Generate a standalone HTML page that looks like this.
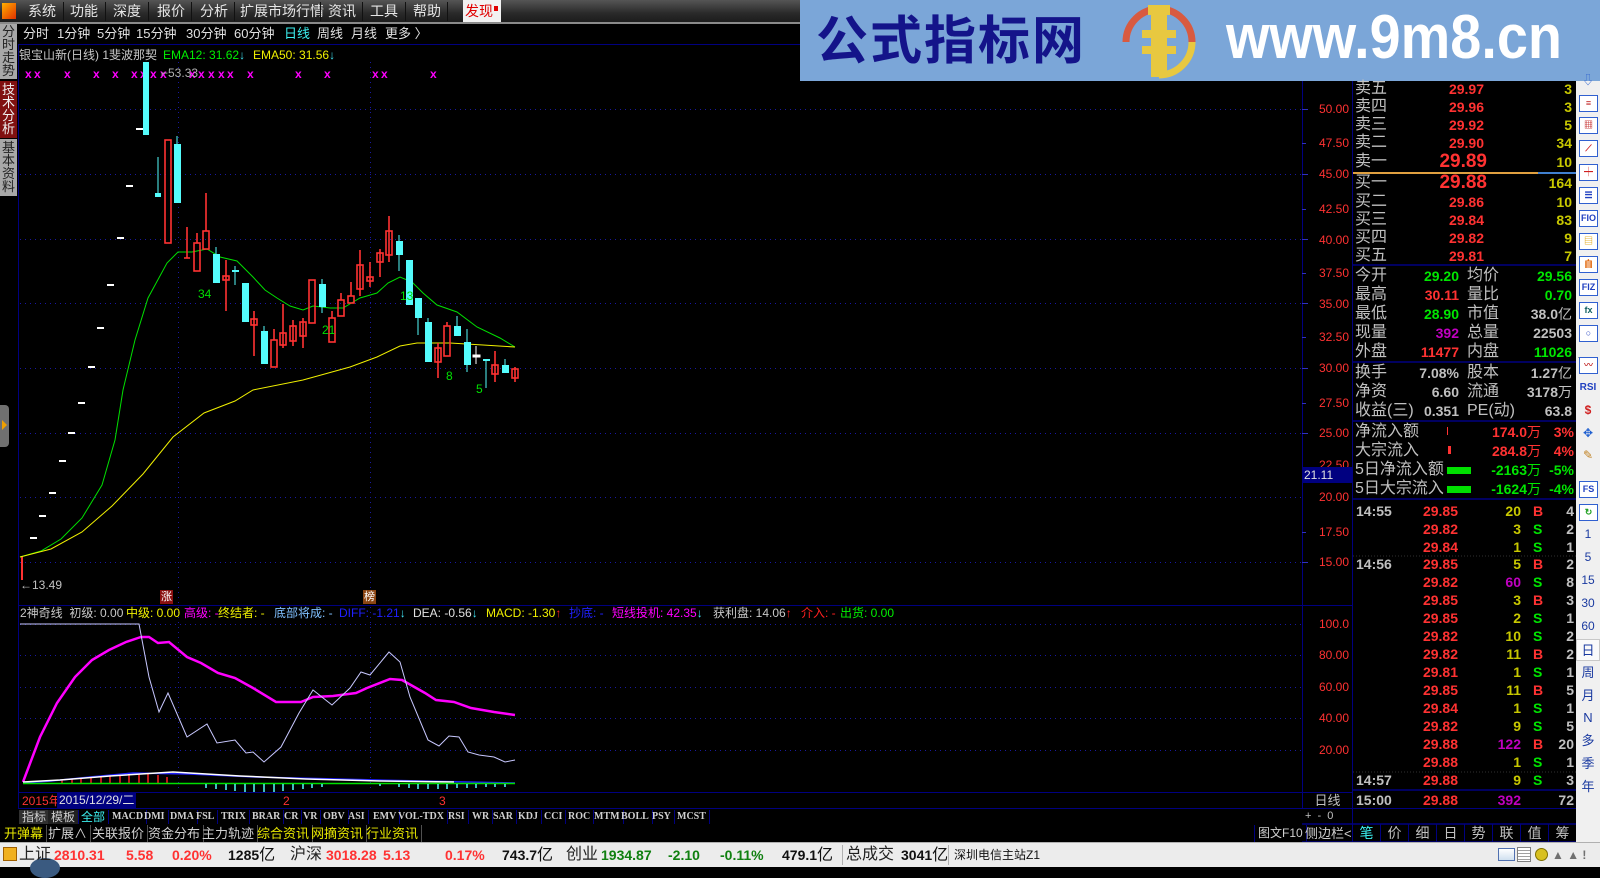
<!DOCTYPE html>
<html><head><meta charset="utf-8">
<style>
*{margin:0;padding:0;box-sizing:border-box}
body{width:1600px;height:867px;background:#000;overflow:hidden;position:relative;font-family:"Liberation Sans","Noto Sans CJK SC",sans-serif;}
.a{position:absolute;white-space:nowrap;line-height:18px;height:18px}
.b{font-weight:bold}
.lb{font-size:16px;color:#c0c0c0}
.pr{font-size:14px;font-weight:bold;color:#ff3232;text-align:right}
.vy{font-size:14px;font-weight:bold;color:#c8c800;text-align:right}
.g{color:#00e600}.r{color:#ff3232}.m{color:#c000c0}.w{color:#c0c0c0}.y{color:#c8c800}
.mi{position:absolute;top:0;height:22px;line-height:22px;font-size:14px;color:#e6e6e6}
.pb{position:absolute;top:25px;height:18px;line-height:18px;font-size:13px;color:#e0e0e0}
.it{position:absolute;top:810px;height:14px;line-height:14px;font-size:10px;color:#d0d0d0;font-family:"Liberation Serif",serif;font-weight:bold;border-right:1px solid #000080;padding:0 3px}
.fr{position:absolute;top:825px;height:17px;line-height:17px;font-size:13px;color:#d0d0d0;border-right:1px solid #505050;padding:0 3px}
.ax{position:absolute;font-size:12px;color:#ff3232;text-align:right;width:46px;left:1303px;height:14px;line-height:14px}
.st{position:absolute;top:844px;height:22px;line-height:22px;font-size:14px;font-weight:bold}
.tab{position:absolute;top:824px;height:18px;width:28px;line-height:18px;text-align:center;font-size:14px;color:#c0c0c0;border-right:1px solid #000080}
.ic{position:absolute;left:1579px;width:19px;height:17px;border:1px solid #3060d0;background:#fff;font-size:9px;color:#2040c0;text-align:center;line-height:15px;font-weight:bold}
.sn{position:absolute;left:1576px;width:24px;text-align:center;font-size:12px;color:#1a3aa0;height:16px;line-height:16px}
</style></head><body>

<div style="position:absolute;left:0;top:0;width:800px;height:22px;background:linear-gradient(#555,#2a2a2a 60%,#1c1c1c)"></div>
<div style="position:absolute;left:0;top:22px;width:800px;height:2px;background:#8a8a8a"></div>
<div style="position:absolute;left:2px;top:3px;width:14px;height:16px;background:linear-gradient(135deg,#ffb000,#e03000)"></div>
<div class="mi" style="left:28px">系统</div>
<div class="mi" style="left:70px">功能</div>
<div class="mi" style="left:113px">深度</div>
<div class="mi" style="left:157px">报价</div>
<div class="mi" style="left:200px">分析</div>
<div class="mi" style="left:240px">扩展市场行情</div>
<div class="mi" style="left:328px">资讯</div>
<div class="mi" style="left:370px">工具</div>
<div class="mi" style="left:413px">帮助</div>
<div style="position:absolute;left:63px;top:2px;width:1px;height:19px;background:#111"></div>
<div style="position:absolute;left:105px;top:2px;width:1px;height:19px;background:#111"></div>
<div style="position:absolute;left:148px;top:2px;width:1px;height:19px;background:#111"></div>
<div style="position:absolute;left:191px;top:2px;width:1px;height:19px;background:#111"></div>
<div style="position:absolute;left:234px;top:2px;width:1px;height:19px;background:#111"></div>
<div style="position:absolute;left:320px;top:2px;width:1px;height:19px;background:#111"></div>
<div style="position:absolute;left:362px;top:2px;width:1px;height:19px;background:#111"></div>
<div style="position:absolute;left:405px;top:2px;width:1px;height:19px;background:#111"></div>
<div style="position:absolute;left:447px;top:2px;width:1px;height:19px;background:#111"></div>
<div style="position:absolute;left:463px;top:0;width:38px;height:22px;background:#f2f2f2"></div>
<div class="mi" style="left:465px;color:#e00000">发现</div>
<div style="position:absolute;left:494px;top:6px;width:4px;height:5px;background:#e00000"></div>

<div style="position:absolute;left:800px;top:0;width:800px;height:81px;background:#7ba6d8"></div>
<div style="position:absolute;left:816px;top:6px;font-size:52px;line-height:62px;font-weight:bold;color:#14148a;font-family:'Noto Sans CJK SC',sans-serif;letter-spacing:2px">公式指标网</div>
<svg style="position:absolute;left:1118px;top:2px" width="82" height="80" viewBox="0 0 82 80">
<path d="M8 40 A33 33 0 0 1 74 40" fill="none" stroke="#d85a40" stroke-width="7"/>
<path d="M74 40 A33 33 0 0 1 41 73" fill="none" stroke="#e8c840" stroke-width="7"/>
<rect x="30" y="3" width="22" height="10" fill="#e8c840"/>
<rect x="33" y="13" width="16" height="62" fill="#e8c840"/>
<rect x="24" y="28" width="34" height="8" fill="#e8c840"/>
<rect x="24" y="44" width="34" height="8" fill="#e8c840"/>
</svg>
<div style="position:absolute;left:1226px;top:5px;font-size:62px;line-height:66px;font-weight:bold;color:#fff;font-family:'Liberation Sans',sans-serif;transform:scaleX(0.9);transform-origin:0 0">www.9m8.cn</div>

<div class="pb" style="left:23px">分时</div>
<div class="pb" style="left:57px">1分钟</div>
<div class="pb" style="left:97px">5分钟</div>
<div class="pb" style="left:136px">15分钟</div>
<div class="pb" style="left:186px">30分钟</div>
<div class="pb" style="left:234px">60分钟</div>
<div class="pb" style="left:284px;color:#3cf0f0">日线</div>
<div class="pb" style="left:317px">周线</div>
<div class="pb" style="left:351px">月线</div>
<div class="pb" style="left:385px">更多 〉</div>
<div style="position:absolute;left:18px;top:44px;width:782px;height:1px;background:#000080"></div>

<div style="position:absolute;left:0;top:24px;width:17px;height:55px;background:#a8a8a8;color:#222;font-size:13px;line-height:13px;text-align:center;padding-top:1px">分<br>时<br>走<br>势</div>
<div style="position:absolute;left:0;top:81px;width:17px;height:57px;background:#801010;color:#f0f0f0;font-size:13px;line-height:13px;text-align:center;padding-top:2px">技<br>术<br>分<br>析</div>
<div style="position:absolute;left:0;top:139px;width:17px;height:57px;background:#a8a8a8;color:#222;font-size:13px;line-height:13px;text-align:center;padding-top:2px">基<br>本<br>资<br>料</div>
<div style="position:absolute;left:0;top:405px;width:9px;height:42px;background:#707070;border-radius:0 4px 4px 0"></div>
<div style="position:absolute;left:2px;top:420px;width:0;height:0;border-left:5px solid #f0a000;border-top:5px solid transparent;border-bottom:5px solid transparent"></div>

<div class="a" style="left:19px;top:46px;font-size:12px;color:#c8c8c8">银宝山新(日线) 1斐波那契</div>
<div class="a" style="left:163px;top:46px;font-size:12px;color:#00f000">EMA12: 31.62<span style="color:#40e0f0">↓</span></div>
<div class="a" style="left:253px;top:46px;font-size:12px;color:#f0f000">EMA50: 31.56<span style="color:#40e0f0">↓</span></div>

<svg style="position:absolute;left:0;top:0" width="1600" height="867">
<g stroke="#000080" stroke-width="1">
<line x1="18.5" y1="45" x2="18.5" y2="808"/>
<line x1="1302.5" y1="81" x2="1302.5" y2="808"/>
<line x1="18" y1="605.5" x2="1352" y2="605.5"/>
<line x1="18" y1="792.5" x2="1352" y2="792.5"/>
<line x1="18" y1="808.5" x2="1576" y2="808.5"/>
<line x1="1352.5" y1="81" x2="1352.5" y2="842"/>
</g>
<g stroke="#1818a0" stroke-width="1" stroke-dasharray="1,4">
<line x1="20" y1="109.5" x2="1302" y2="109.5"/>
<line x1="20" y1="174.5" x2="1302" y2="174.5"/>
<line x1="20" y1="239.5" x2="1302" y2="239.5"/>
<line x1="20" y1="303.5" x2="1302" y2="303.5"/>
<line x1="20" y1="368.5" x2="1302" y2="368.5"/>
<line x1="20" y1="433.5" x2="1302" y2="433.5"/>
<line x1="20" y1="497.5" x2="1302" y2="497.5"/>
<line x1="20" y1="562.5" x2="1302" y2="562.5"/>
<line x1="20" y1="624.5" x2="1302" y2="624.5"/>
<line x1="20" y1="655.5" x2="1302" y2="655.5"/>
<line x1="20" y1="687.5" x2="1302" y2="687.5"/>
<line x1="20" y1="718.5" x2="1302" y2="718.5"/>
<line x1="20" y1="750.5" x2="1302" y2="750.5"/>
<line x1="178.5" y1="62" x2="178.5" y2="790"/>
<line x1="370.5" y1="62" x2="370.5" y2="790"/>
</g>
<g stroke="#3030c0" stroke-width="1">
<line x1="1302" y1="109.5" x2="1308" y2="109.5"/><line x1="1302" y1="143.5" x2="1306" y2="143.5"/>
<line x1="1302" y1="174.5" x2="1308" y2="174.5"/><line x1="1302" y1="209.5" x2="1306" y2="209.5"/>
<line x1="1302" y1="239.5" x2="1308" y2="239.5"/><line x1="1302" y1="273.5" x2="1306" y2="273.5"/>
<line x1="1302" y1="303.5" x2="1308" y2="303.5"/><line x1="1302" y1="337.5" x2="1306" y2="337.5"/>
<line x1="1302" y1="368.5" x2="1308" y2="368.5"/><line x1="1302" y1="403.5" x2="1306" y2="403.5"/>
<line x1="1302" y1="433.5" x2="1308" y2="433.5"/><line x1="1302" y1="532.5" x2="1306" y2="532.5"/>
<line x1="1302" y1="562.5" x2="1308" y2="562.5"/>
</g>
<g fill="#ff00ff" font-size="12" font-weight="bold" font-family="Liberation Sans">
<text x="25" y="78">x</text><text x="34" y="78">x</text><text x="64" y="78">x</text><text x="93" y="78">x</text><text x="112" y="78">x</text><text x="131" y="78">x</text><text x="140" y="78">x</text><text x="150" y="78">x</text><text x="160" y="78">x</text><text x="189" y="78">x</text><text x="198" y="78">x</text><text x="208" y="78">x</text><text x="218" y="78">x</text><text x="227" y="78">x</text><text x="247" y="78">x</text><text x="295" y="78">x</text><text x="324" y="78">x</text><text x="372" y="78">x</text><text x="381" y="78">x</text><text x="430" y="78">x</text>
</g>
<text x="161" y="77" fill="#b0b0b0" font-size="12" font-family="Liberation Sans">⌐53.33</text>
<g stroke="#ffffff" stroke-width="2">
<line x1="136" y1="129" x2="143" y2="129"/><line x1="126" y1="186" x2="133" y2="186"/>
<line x1="117" y1="238" x2="124" y2="238"/><line x1="107" y1="285" x2="114" y2="285"/>
<line x1="97" y1="328" x2="104" y2="328"/><line x1="88" y1="367" x2="95" y2="367"/>
<line x1="78" y1="403" x2="85" y2="403"/><line x1="68" y1="433" x2="75" y2="433"/>
<line x1="59" y1="461" x2="66" y2="461"/><line x1="49" y1="493" x2="56" y2="493"/>
<line x1="39" y1="516" x2="46" y2="516"/><line x1="30" y1="538" x2="37" y2="538"/>
</g>
<rect x="21" y="556" width="2" height="24" fill="#ff3232"/>
<polyline fill="none" stroke="#00e000" stroke-width="1" points="20,557 41,551 61,539 82,518 102,485 115,440 123,390 135,340 148,298 167,263 178,252 192,252 207,249 220,257 237,261 253,277 265,290 277,298 290,306 303,310 313,306 330,308 343,308 360,298 377,293 388,283 400,277 412,282 423,293 437,305 457,312 477,327 500,338 515,347"/>
<polyline fill="none" stroke="#f0f000" stroke-width="1" points="20,557 51,549 82,532 112,506 143,474 173,437 204,413 235,401 253,390 303,380 350,367 377,357 400,346 417,343 450,343 483,345 515,347"/>
<g fill="#54fcfc" stroke="#54fcfc">
<rect x="143" y="62" width="6" height="73" stroke="none"/>
<line x1="158" y1="157" x2="158" y2="197"/><rect x="155" y="193" width="6" height="4" stroke="none"/>
<line x1="177" y1="136" x2="177" y2="146"/><rect x="174" y="144" width="7" height="59" stroke="none"/>
<line x1="216" y1="247" x2="216" y2="255"/><rect x="213" y="254" width="7" height="29" stroke="none"/>
<line x1="235" y1="266" x2="235" y2="285"/><rect x="232" y="270" width="7" height="2" stroke="none"/>
<rect x="242" y="283" width="7" height="39" stroke="none"/>
<line x1="264" y1="326" x2="264" y2="332"/><rect x="261" y="331" width="7" height="33" stroke="none"/>
<line x1="322" y1="279" x2="322" y2="313"/><rect x="319" y="284" width="7" height="23" stroke="none"/>
<line x1="399" y1="235" x2="399" y2="271"/><rect x="396" y="241" width="7" height="14" stroke="none"/>
<rect x="406" y="260" width="7" height="45" stroke="none"/>
<line x1="418" y1="298" x2="418" y2="335"/><rect x="415" y="298" width="7" height="20" stroke="none"/>
<line x1="428" y1="318" x2="428" y2="323"/><rect x="425" y="322" width="7" height="40" stroke="none"/>
<line x1="457" y1="316" x2="457" y2="327"/><rect x="454" y="326" width="7" height="10" stroke="none"/>
<line x1="467" y1="329" x2="467" y2="372"/><rect x="464" y="342" width="7" height="23" stroke="none"/>
<line x1="486" y1="359" x2="486" y2="388"/><rect x="483" y="359" width="7" height="2" stroke="none"/>
<line x1="505" y1="359" x2="505" y2="366"/><rect x="502" y="365" width="7" height="8" stroke="none"/>
</g>
<g stroke="#ffffff"><line x1="476" y1="346" x2="476" y2="364"/><rect x="473" y="355" width="7" height="2" fill="#fff"/></g>
<g fill="none" stroke="#ff3232" stroke-width="1.6">
<rect x="165" y="140" width="6" height="103"/>
<line x1="187" y1="227" x2="187" y2="258"/><line x1="184" y1="258" x2="190" y2="258"/>
<line x1="197" y1="233" x2="197" y2="243"/><rect x="194" y="243" width="6" height="28"/>
<line x1="206" y1="193" x2="206" y2="231"/><rect x="203" y="231" width="6" height="18"/>
<line x1="226" y1="260" x2="226" y2="311"/><rect x="223" y="276" width="6" height="4"/>
<line x1="254" y1="311" x2="254" y2="356"/><rect x="251" y="319" width="6" height="6"/>
<line x1="274" y1="329" x2="274" y2="340"/><rect x="271" y="340" width="6" height="27"/>
<line x1="283" y1="304" x2="283" y2="348"/><rect x="280" y="333" width="6" height="12"/>
<line x1="293" y1="320" x2="293" y2="346"/><rect x="290" y="326" width="6" height="15"/>
<line x1="303" y1="318" x2="303" y2="348"/><rect x="300" y="322" width="6" height="14"/>
<rect x="309" y="280" width="6" height="43"/>
<line x1="332" y1="311" x2="332" y2="318"/><rect x="329" y="318" width="6" height="24"/>
<line x1="341" y1="293" x2="341" y2="300"/><rect x="338" y="300" width="6" height="16"/>
<line x1="351" y1="282" x2="351" y2="296"/><rect x="348" y="296" width="6" height="7"/>
<line x1="360" y1="250" x2="360" y2="296"/><rect x="357" y="265" width="6" height="24"/>
<line x1="370" y1="262" x2="370" y2="287"/><rect x="367" y="277" width="6" height="4"/>
<line x1="380" y1="249" x2="380" y2="277"/><rect x="377" y="253" width="6" height="9"/>
<line x1="389" y1="216" x2="389" y2="262"/><rect x="386" y="231" width="6" height="24"/>
<line x1="438" y1="343" x2="438" y2="378"/><rect x="435" y="348" width="6" height="14"/>
<line x1="447" y1="322" x2="447" y2="326"/><rect x="444" y="326" width="6" height="30"/>
<line x1="495" y1="351" x2="495" y2="382"/><rect x="492" y="365" width="6" height="9"/>
<line x1="515" y1="367" x2="515" y2="382"/><rect x="512" y="369" width="6" height="9"/>
</g>
<g fill="#00e000" font-size="12" font-family="Liberation Sans">
<text x="198" y="298">34</text><text x="322" y="334">21</text><text x="400" y="300">13</text><text x="446" y="380">8</text><text x="476" y="393">5</text>
</g>
<text x="20" y="589" fill="#c0c0c0" font-size="12" font-family="Liberation Sans">←13.49</text>
<polyline fill="none" stroke="#ff00ff" stroke-width="2.5" points="23,782 40,737 57,703 75,677 92,660 109,650 126,642 141,637 149,637 158,643 169,642 187,657 201,663 218,673 235,678 253,688 276,702 301,702 313,697 333,696 356,693 367,688 390,679 402,680 425,693 436,700 454,702 471,708 494,712 515,715"/>
<polyline fill="none" stroke="#c8c8ff" stroke-width="1" points="20,624 139,624 149,677 159,712 168,693 187,737 207,724 217,743 235,740 246,753 253,752 264,762 281,747 299,713 313,690 332,705 350,688 361,672 370,675 389,652 400,662 410,697 428,740 439,746 449,736 459,737 468,752 479,755 494,757 505,762 515,760"/>
<g stroke="#ff2020" stroke-width="1.5">
<line x1="62" y1="780" x2="62" y2="783"/><line x1="72" y1="779" x2="72" y2="783"/><line x1="81" y1="778" x2="81" y2="783"/><line x1="91" y1="777" x2="91" y2="783"/><line x1="101" y1="777" x2="101" y2="783"/><line x1="110" y1="776" x2="110" y2="783"/><line x1="120" y1="775" x2="120" y2="783"/><line x1="129" y1="774" x2="129" y2="783"/><line x1="139" y1="774" x2="139" y2="783"/><line x1="148" y1="773" x2="148" y2="783"/><line x1="158" y1="775" x2="158" y2="783"/><line x1="167" y1="777" x2="167" y2="783"/>
</g>
<polyline fill="none" stroke="#2020ff" stroke-width="1.5" points="23,783 51,781 90,777 133,773 189,774 255,777 378,780 515,783"/>
<polyline fill="none" stroke="#ffffff" stroke-width="1.5" points="23,782 60,780 110,776 173,772 240,776 306,779 380,781 454,782"/>
<line x1="23" y1="783.5" x2="515" y2="783.5" stroke="#00e000" stroke-width="1.5"/>
<g stroke="#54fcfc" stroke-width="1.5">
<line x1="206" y1="784" x2="206" y2="788"/><line x1="216" y1="784" x2="216" y2="789"/><line x1="226" y1="784" x2="226" y2="790"/><line x1="235" y1="784" x2="235" y2="791"/><line x1="245" y1="784" x2="245" y2="792"/><line x1="254" y1="784" x2="254" y2="792"/><line x1="264" y1="784" x2="264" y2="792"/><line x1="274" y1="784" x2="274" y2="792"/><line x1="283" y1="784" x2="283" y2="791"/><line x1="293" y1="784" x2="293" y2="790"/><line x1="303" y1="784" x2="303" y2="789"/><line x1="312" y1="784" x2="312" y2="788"/><line x1="322" y1="784" x2="322" y2="787"/><line x1="380" y1="784" x2="380" y2="786"/><line x1="399" y1="784" x2="399" y2="787"/><line x1="409" y1="784" x2="409" y2="788"/><line x1="418" y1="784" x2="418" y2="789"/><line x1="428" y1="784" x2="428" y2="789"/><line x1="438" y1="784" x2="438" y2="789"/><line x1="447" y1="784" x2="447" y2="789"/><line x1="457" y1="784" x2="457" y2="788"/><line x1="467" y1="784" x2="467" y2="788"/><line x1="476" y1="784" x2="476" y2="788"/><line x1="486" y1="784" x2="486" y2="787"/><line x1="495" y1="784" x2="495" y2="787"/><line x1="505" y1="784" x2="505" y2="787"/>
</g>
<line x1="1353" y1="173" x2="1538" y2="173" stroke="#e0a040" stroke-width="2"/>
<line x1="1538" y1="173" x2="1576" y2="173" stroke="#4080d0" stroke-width="2"/>
<g stroke="#000080" stroke-width="1.5">
<line x1="1353" y1="265" x2="1576" y2="265"/><line x1="1353" y1="362" x2="1576" y2="362"/><line x1="1353" y1="421" x2="1576" y2="421"/><line x1="1353" y1="499" x2="1576" y2="499"/><line x1="1353" y1="790" x2="1576" y2="790"/><line x1="1302" y1="824" x2="1576" y2="824"/><line x1="1302" y1="842" x2="1576" y2="842"/>
</g>
<line x1="1353" y1="556" x2="1576" y2="556" stroke="#303030" stroke-dasharray="1,2"/>
<line x1="1353" y1="772" x2="1576" y2="772" stroke="#303030" stroke-dasharray="1,2"/>
<rect x="1447" y="427" width="1" height="8" fill="#ff3232"/>
<rect x="1448" y="446" width="3" height="8" fill="#ff3232"/>
<rect x="1447" y="467" width="24" height="7" fill="#00e000"/>
<rect x="1447" y="486" width="24" height="7" fill="#00e000"/>
</svg>

<div class="ax" style="top:102px">50.00</div><div class="ax" style="top:136px">47.50</div><div class="ax" style="top:167px">45.00</div><div class="ax" style="top:202px">42.50</div><div class="ax" style="top:233px">40.00</div><div class="ax" style="top:266px">37.50</div><div class="ax" style="top:297px">35.00</div><div class="ax" style="top:330px">32.50</div><div class="ax" style="top:361px">30.00</div><div class="ax" style="top:396px">27.50</div><div class="ax" style="top:426px">25.00</div><div class="ax" style="top:458px">22.50</div><div class="ax" style="top:490px">20.00</div><div class="ax" style="top:525px">17.50</div><div class="ax" style="top:555px">15.00</div>
<div style="position:absolute;left:1302px;top:467px;width:50px;height:16px;background:#000080;color:#e0e0e0;font-size:12px;line-height:16px;padding-left:2px">21.11</div>
<div class="ax" style="top:617px">100.0</div><div class="ax" style="top:648px">80.00</div><div class="ax" style="top:680px">60.00</div><div class="ax" style="top:711px">40.00</div><div class="ax" style="top:743px">20.00</div>

<div style="position:absolute;left:160px;top:590px;width:13px;height:14px;background:#8b1010;color:#fff;font-size:11px;line-height:14px;text-align:center">涨</div>
<div style="position:absolute;left:363px;top:590px;width:13px;height:14px;background:#8b4513;color:#fff;font-size:11px;line-height:14px;text-align:center">榜</div>
<div class="a" style="top:604px;left:20px;font-size:12px;color:#c8c8c8">2神奇线 &nbsp;初级: 0.00</div>
<div class="a" style="top:604px;left:126px;font-size:12px;color:#f0f000">中级: 0.00</div>
<div class="a" style="top:604px;left:184px;font-size:12px;color:#ff00ff">高级: -</div>
<div class="a" style="top:604px;left:218px;font-size:12px;color:#f0f000">终结者: -</div>
<div class="a" style="top:604px;left:274px;font-size:12px;color:#80c0ff">底部将成: -</div>
<div class="a" style="top:604px;left:339px;font-size:12px;color:#2020ff">DIFF: -1.21<span style="color:#40e0f0">↓</span></div>
<div class="a" style="top:604px;left:413px;font-size:12px;color:#e0e0e0">DEA: -0.56<span style="color:#40e0f0">↓</span></div>
<div class="a" style="top:604px;left:486px;font-size:12px;color:#f0f000">MACD: -1.30<span style="color:#ff2020">↑</span></div>
<div class="a" style="top:604px;left:569px;font-size:12px;color:#2020ff">抄底: -</div>
<div class="a" style="top:604px;left:612px;font-size:12px;color:#ff00ff">短线投机: 42.35<span style="color:#40e0f0">↓</span></div>
<div class="a" style="top:604px;left:713px;font-size:12px;color:#c8c8c8">获利盘: 14.06<span style="color:#ff2020">↑</span></div>
<div class="a" style="top:604px;left:801px;font-size:12px;color:#ff2020">介入: -</div>
<div class="a" style="top:604px;left:840px;font-size:12px;color:#00f000">出货: 0.00</div>

<div class="a" style="top:792px;left:22px;font-size:12px;color:#ff3232">2015年</div>
<div class="a" style="top:793px;left:57px;height:15px;line-height:15px;font-size:12px;color:#e0e0e0;background:#000080;padding:0 2px">2015/12/29/二</div>
<div class="a" style="top:792px;left:283px;font-size:12px;color:#ff3232">2</div>
<div class="a" style="top:792px;left:439px;font-size:12px;color:#ff3232">3</div>
<div style="position:absolute;left:1302px;top:792px;width:51px;height:17px;border:1px solid #000080;color:#c0c0c0;font-size:13px;line-height:15px;text-align:center">日线</div>
<div class="a" style="top:808px;left:1305px;font-size:11px;color:#c0c0c0;height:16px;line-height:16px">+ &nbsp;- &nbsp;0</div>

<div class="it" style="left:19px;background:#303030;font-family:'Noto Sans CJK SC',sans-serif;font-size:12px;font-weight:normal">指标</div>
<div class="it" style="left:48px;background:#202020;font-family:'Noto Sans CJK SC',sans-serif;font-size:12px;font-weight:normal">模板</div>
<div class="it" style="left:78px;color:#3cf0f0;font-family:'Noto Sans CJK SC',sans-serif;font-size:12px;font-weight:normal">全部</div>
<div class="it" style="left:109px">MACD</div><div class="it" style="left:141px">DMI</div><div class="it" style="left:167px">DMA</div><div class="it" style="left:193px">FSL</div><div class="it" style="left:218px">TRIX</div><div class="it" style="left:249px">BRAR</div><div class="it" style="left:281px">CR</div><div class="it" style="left:300px">VR</div><div class="it" style="left:320px">OBV</div><div class="it" style="left:345px">ASI</div><div class="it" style="left:370px">EMV</div><div class="it" style="left:395px">VOL-TDX</div><div class="it" style="left:445px">RSI</div><div class="it" style="left:469px">WR</div><div class="it" style="left:490px">SAR</div><div class="it" style="left:515px">KDJ</div><div class="it" style="left:541px">CCI</div><div class="it" style="left:565px">ROC</div><div class="it" style="left:591px">MTM</div><div class="it" style="left:618px">BOLL</div><div class="it" style="left:649px">PSY</div><div class="it" style="left:674px">MCST</div>

<div class="fr" style="left:1px;color:#e8e800">开弹幕</div>
<div class="fr" style="left:45px">扩展∧</div>
<div class="fr" style="left:89px">关联报价</div>
<div class="fr" style="left:145px">资金分布</div>
<div class="fr" style="left:199px">主力轨迹</div>
<div class="fr" style="left:254px;color:#e8e800">综合资讯</div>
<div class="fr" style="left:308px;color:#e8e800">网摘资讯</div>
<div class="fr" style="left:363px;color:#e8e800">行业资讯</div>
<div class="fr" style="left:1254px;font-size:12px;border-left:1px solid #000080;border-right:1px solid #000080">图文F10</div>
<div class="fr" style="left:1302px;font-size:13px;border-right:none">侧边栏&lt;</div>

<div class="tab" style="left:1353px;color:#3cf0f0">笔</div><div class="tab" style="left:1381px">价</div><div class="tab" style="left:1409px">细</div><div class="tab" style="left:1437px">日</div><div class="tab" style="left:1465px">势</div><div class="tab" style="left:1493px">联</div><div class="tab" style="left:1521px">值</div><div class="tab" style="left:1549px">筹</div>

<div style="position:absolute;left:0;top:842px;width:1600px;height:25px;background:#ececec;border-top:1px solid #b0b0b0"></div>
<div style="position:absolute;left:3px;top:847px;width:14px;height:14px;background:#f0b020;border:1px solid #a06000"></div>
<div style="position:absolute;left:30px;top:858px;width:30px;height:20px;border-radius:50%;background:#3a5a80"></div>
<div class="st" style="left:19px;font-weight:normal;font-size:16px;color:#222">上证</div>
<div class="st r" style="left:54px">2810.31</div>
<div class="st r" style="left:126px">5.58</div>
<div class="st r" style="left:172px">0.20%</div>
<div class="st" style="left:228px;color:#111">1285<span style="font-weight:normal;font-size:16px">亿</span></div>
<div class="st" style="left:290px;font-weight:normal;font-size:16px;color:#222">沪深</div>
<div class="st r" style="left:326px">3018.28</div>
<div class="st r" style="left:383px">5.13</div>
<div class="st r" style="left:445px">0.17%</div>
<div class="st" style="left:502px;color:#111">743.7<span style="font-weight:normal;font-size:16px">亿</span></div>
<div class="st" style="left:566px;font-weight:normal;font-size:16px;color:#222">创业</div>
<div class="st" style="left:601px;color:#108010">1934.87</div>
<div class="st" style="left:668px;color:#108010">-2.10</div>
<div class="st" style="left:720px;color:#108010">-0.11%</div>
<div class="st" style="left:782px;color:#111">479.1<span style="font-weight:normal;font-size:16px">亿</span></div>
<div style="position:absolute;left:842px;top:845px;width:1px;height:20px;background:#b0b0b0"></div>
<div class="st" style="left:846px;font-weight:normal;font-size:16px;color:#222">总成交</div>
<div class="st" style="left:901px;color:#111">3041<span style="font-weight:normal;font-size:16px">亿</span></div>
<div style="position:absolute;left:948px;top:845px;width:1px;height:20px;background:#b0b0b0"></div>
<div class="st" style="left:954px;font-weight:normal;font-size:12px;color:#111">深圳电信主站Z1</div>
<div style="position:absolute;left:1498px;top:848px;width:17px;height:13px;border:1px solid #5070b0;background:linear-gradient(#fff,#d0e0f0)"></div>
<div style="position:absolute;left:1517px;top:847px;width:14px;height:15px;border:1px solid #808080;background:repeating-linear-gradient(#fff 0 2px,#a0a0a0 2px 3px)"></div>
<div style="position:absolute;left:1535px;top:848px;width:13px;height:13px;border-radius:50%;background:#d8c020;border:1px solid #807000"></div>
<div class="st" style="left:1552px;font-size:12px;color:#707070">▲ ▲ !</div>

<div class="a lb" style="left:1355px;top:80px">卖五</div><div class="a pr" style="right:116px;top:80px">29.97</div><div class="a vy" style="right:28px;top:80px">3</div>
<div class="a lb" style="left:1355px;top:98px">卖四</div><div class="a pr" style="right:116px;top:98px">29.96</div><div class="a vy" style="right:28px;top:98px">3</div>
<div class="a lb" style="left:1355px;top:116px">卖三</div><div class="a pr" style="right:116px;top:116px">29.92</div><div class="a vy" style="right:28px;top:116px">5</div>
<div class="a lb" style="left:1355px;top:134px">卖二</div><div class="a pr" style="right:116px;top:134px">29.90</div><div class="a vy" style="right:28px;top:134px">34</div>
<div class="a lb" style="left:1355px;top:153px">卖一</div><div class="a pr" style="right:113px;top:152px;font-size:19px;height:20px;line-height:20px">29.89</div><div class="a vy" style="right:28px;top:153px">10</div>
<div class="a lb" style="left:1355px;top:174px">买一</div><div class="a pr" style="right:113px;top:173px;font-size:19px;height:20px;line-height:20px">29.88</div><div class="a vy" style="right:28px;top:174px">164</div>
<div class="a lb" style="left:1355px;top:193px">买二</div><div class="a pr" style="right:116px;top:193px">29.86</div><div class="a vy" style="right:28px;top:193px">10</div>
<div class="a lb" style="left:1355px;top:211px">买三</div><div class="a pr" style="right:116px;top:211px">29.84</div><div class="a vy" style="right:28px;top:211px">83</div>
<div class="a lb" style="left:1355px;top:229px">买四</div><div class="a pr" style="right:116px;top:229px">29.82</div><div class="a vy" style="right:28px;top:229px">9</div>
<div class="a lb" style="left:1355px;top:247px">买五</div><div class="a pr" style="right:116px;top:247px">29.81</div><div class="a vy" style="right:28px;top:247px">7</div>

<div class="a lb" style="left:1355px;top:267px">今开</div><div class="a pr g" style="right:141px;top:267px">29.20</div><div class="a lb" style="left:1467px;top:267px">均价</div><div class="a pr g" style="right:28px;top:267px">29.56</div>
<div class="a lb" style="left:1355px;top:286px">最高</div><div class="a pr" style="right:141px;top:286px">30.11</div><div class="a lb" style="left:1467px;top:286px">量比</div><div class="a pr g" style="right:28px;top:286px">0.70</div>
<div class="a lb" style="left:1355px;top:305px">最低</div><div class="a pr g" style="right:141px;top:305px">28.90</div><div class="a lb" style="left:1467px;top:305px">市值</div><div class="a pr w" style="right:28px;top:305px">38.0<span style="font-weight:normal">亿</span></div>
<div class="a lb" style="left:1355px;top:324px">现量</div><div class="a pr m" style="right:141px;top:324px">392</div><div class="a lb" style="left:1467px;top:324px">总量</div><div class="a pr w" style="right:28px;top:324px">22503</div>
<div class="a lb" style="left:1355px;top:343px">外盘</div><div class="a pr" style="right:141px;top:343px">11477</div><div class="a lb" style="left:1467px;top:343px">内盘</div><div class="a pr g" style="right:28px;top:343px">11026</div>

<div class="a lb" style="left:1355px;top:364px">换手</div><div class="a pr w" style="right:141px;top:364px">7.08%</div><div class="a lb" style="left:1467px;top:364px">股本</div><div class="a pr w" style="right:28px;top:364px">1.27<span style="font-weight:normal">亿</span></div>
<div class="a lb" style="left:1355px;top:383px">净资</div><div class="a pr w" style="right:141px;top:383px">6.60</div><div class="a lb" style="left:1467px;top:383px">流通</div><div class="a pr w" style="right:28px;top:383px">3178<span style="font-weight:normal">万</span></div>
<div class="a lb" style="left:1355px;top:402px">收益(三)</div><div class="a pr w" style="right:141px;top:402px">0.351</div><div class="a lb" style="left:1467px;top:402px">PE(动)</div><div class="a pr w" style="right:28px;top:402px">63.8</div>

<div class="a lb" style="left:1355px;top:423px">净流入额</div><div class="a pr" style="right:59px;top:423px">174.0<span style="font-weight:normal">万</span></div><div class="a pr" style="right:26px;top:423px">3%</div>
<div class="a lb" style="left:1355px;top:442px">大宗流入</div><div class="a pr" style="right:59px;top:442px">284.8<span style="font-weight:normal">万</span></div><div class="a pr" style="right:26px;top:442px">4%</div>
<div class="a lb" style="left:1355px;top:461px">5日净流入额</div><div class="a pr g" style="right:59px;top:461px">-2163<span style="font-weight:normal">万</span></div><div class="a pr g" style="right:26px;top:461px">-5%</div>
<div class="a lb" style="left:1355px;top:480px">5日大宗流入</div><div class="a pr g" style="right:59px;top:480px">-1624<span style="font-weight:normal">万</span></div><div class="a pr g" style="right:26px;top:480px">-4%</div>

<div class="a b w" style="left:1356px;top:502px;font-size:14px">14:55</div>
<div class="a b w" style="left:1356px;top:555px;font-size:14px">14:56</div>
<div class="a b w" style="left:1356px;top:771px;font-size:14px">14:57</div>
<div class="a b w" style="left:1356px;top:791px;font-size:14px">15:00</div>

<div class="a pr" style="right:142px;top:502px">29.85</div><div class="a vy" style="right:79px;top:502px">20</div><div class="a b r" style="left:1533px;top:502px;font-size:14px">B</div><div class="a pr w" style="right:26px;top:502px">4</div>
<div class="a pr" style="right:142px;top:520px">29.82</div><div class="a vy" style="right:79px;top:520px">3</div><div class="a b g" style="left:1533px;top:520px;font-size:14px">S</div><div class="a pr w" style="right:26px;top:520px">2</div>
<div class="a pr" style="right:142px;top:538px">29.84</div><div class="a vy" style="right:79px;top:538px">1</div><div class="a b g" style="left:1533px;top:538px;font-size:14px">S</div><div class="a pr w" style="right:26px;top:538px">1</div>
<div class="a pr" style="right:142px;top:555px">29.85</div><div class="a vy" style="right:79px;top:555px">5</div><div class="a b r" style="left:1533px;top:555px;font-size:14px">B</div><div class="a pr w" style="right:26px;top:555px">2</div>
<div class="a pr" style="right:142px;top:573px">29.82</div><div class="a vy m" style="right:79px;top:573px">60</div><div class="a b g" style="left:1533px;top:573px;font-size:14px">S</div><div class="a pr w" style="right:26px;top:573px">8</div>
<div class="a pr" style="right:142px;top:591px">29.85</div><div class="a vy" style="right:79px;top:591px">3</div><div class="a b r" style="left:1533px;top:591px;font-size:14px">B</div><div class="a pr w" style="right:26px;top:591px">3</div>
<div class="a pr" style="right:142px;top:609px">29.85</div><div class="a vy" style="right:79px;top:609px">2</div><div class="a b g" style="left:1533px;top:609px;font-size:14px">S</div><div class="a pr w" style="right:26px;top:609px">1</div>
<div class="a pr" style="right:142px;top:627px">29.82</div><div class="a vy" style="right:79px;top:627px">10</div><div class="a b g" style="left:1533px;top:627px;font-size:14px">S</div><div class="a pr w" style="right:26px;top:627px">2</div>
<div class="a pr" style="right:142px;top:645px">29.82</div><div class="a vy" style="right:79px;top:645px">11</div><div class="a b r" style="left:1533px;top:645px;font-size:14px">B</div><div class="a pr w" style="right:26px;top:645px">2</div>
<div class="a pr" style="right:142px;top:663px">29.81</div><div class="a vy" style="right:79px;top:663px">1</div><div class="a b g" style="left:1533px;top:663px;font-size:14px">S</div><div class="a pr w" style="right:26px;top:663px">1</div>
<div class="a pr" style="right:142px;top:681px">29.85</div><div class="a vy" style="right:79px;top:681px">11</div><div class="a b r" style="left:1533px;top:681px;font-size:14px">B</div><div class="a pr w" style="right:26px;top:681px">5</div>
<div class="a pr" style="right:142px;top:699px">29.84</div><div class="a vy" style="right:79px;top:699px">1</div><div class="a b g" style="left:1533px;top:699px;font-size:14px">S</div><div class="a pr w" style="right:26px;top:699px">1</div>
<div class="a pr" style="right:142px;top:717px">29.82</div><div class="a vy" style="right:79px;top:717px">9</div><div class="a b g" style="left:1533px;top:717px;font-size:14px">S</div><div class="a pr w" style="right:26px;top:717px">5</div>
<div class="a pr" style="right:142px;top:735px">29.88</div><div class="a vy m" style="right:79px;top:735px">122</div><div class="a b r" style="left:1533px;top:735px;font-size:14px">B</div><div class="a pr w" style="right:26px;top:735px">20</div>
<div class="a pr" style="right:142px;top:753px">29.88</div><div class="a vy" style="right:79px;top:753px">1</div><div class="a b g" style="left:1533px;top:753px;font-size:14px">S</div><div class="a pr w" style="right:26px;top:753px">1</div>
<div class="a pr" style="right:142px;top:771px">29.88</div><div class="a vy" style="right:79px;top:771px">9</div><div class="a b g" style="left:1533px;top:771px;font-size:14px">S</div><div class="a pr w" style="right:26px;top:771px">3</div>
<div class="a pr" style="right:142px;top:791px">29.88</div><div class="a vy m" style="right:79px;top:791px">392</div><div class="a pr w" style="right:26px;top:791px">72</div>

<div style="position:absolute;left:1576px;top:81px;width:24px;height:761px;background:#f0f0f0"></div>
<div class="sn" style="top:72px;color:#4070d0">⇩</div>
<div class="ic" style="top:95px;color:#c02020">≡</div>
<div class="ic" style="top:117px;color:#c02020">▦</div>
<div class="ic" style="top:140px;color:#d02020">⟋</div>
<div class="ic" style="top:164px;color:#d02020">┿</div>
<div class="ic" style="top:187px">☰</div>
<div class="ic" style="top:210px">FIO</div>
<div class="ic" style="top:233px;color:#e0a000">▤</div>
<div class="ic" style="top:256px;color:#e06000">自</div>
<div class="ic" style="top:279px">FIZ</div>
<div class="ic" style="top:302px;color:#106060">fx</div>
<div class="ic" style="top:325px">○</div>
<div style="position:absolute;left:1578px;top:357px;width:20px;height:1px;background:#a0a0a0"></div>
<div class="ic" style="top:357px;color:#c02020">〰</div>
<div class="sn" style="top:380px;color:#2040c0;font-weight:bold;font-size:10px">RSI</div>
<div class="sn" style="top:402px;color:#d02020;font-weight:bold">$</div>
<div class="sn" style="top:425px;color:#2060d0">✥</div>
<div class="sn" style="top:447px;color:#c08020">✎</div>
<div class="ic" style="top:481px">FS</div>
<div class="ic" style="top:504px;color:#20a020">↻</div>
<div class="sn" style="top:526px">1</div>
<div class="sn" style="top:549px">5</div>
<div class="sn" style="top:572px">15</div>
<div class="sn" style="top:595px">30</div>
<div class="sn" style="top:618px">60</div>
<div class="sn" style="top:639px;height:22px;line-height:22px;background:#fafafa;border:1px solid #c8c8c8;font-size:13px">日</div>
<div class="sn" style="top:665px;font-size:13px">周</div>
<div class="sn" style="top:688px;font-size:13px">月</div>
<div class="sn" style="top:710px;font-size:13px">N</div>
<div class="sn" style="top:733px;font-size:13px">多</div>
<div class="sn" style="top:756px;font-size:13px">季</div>
<div class="sn" style="top:779px;font-size:13px">年</div>
</body></html>
